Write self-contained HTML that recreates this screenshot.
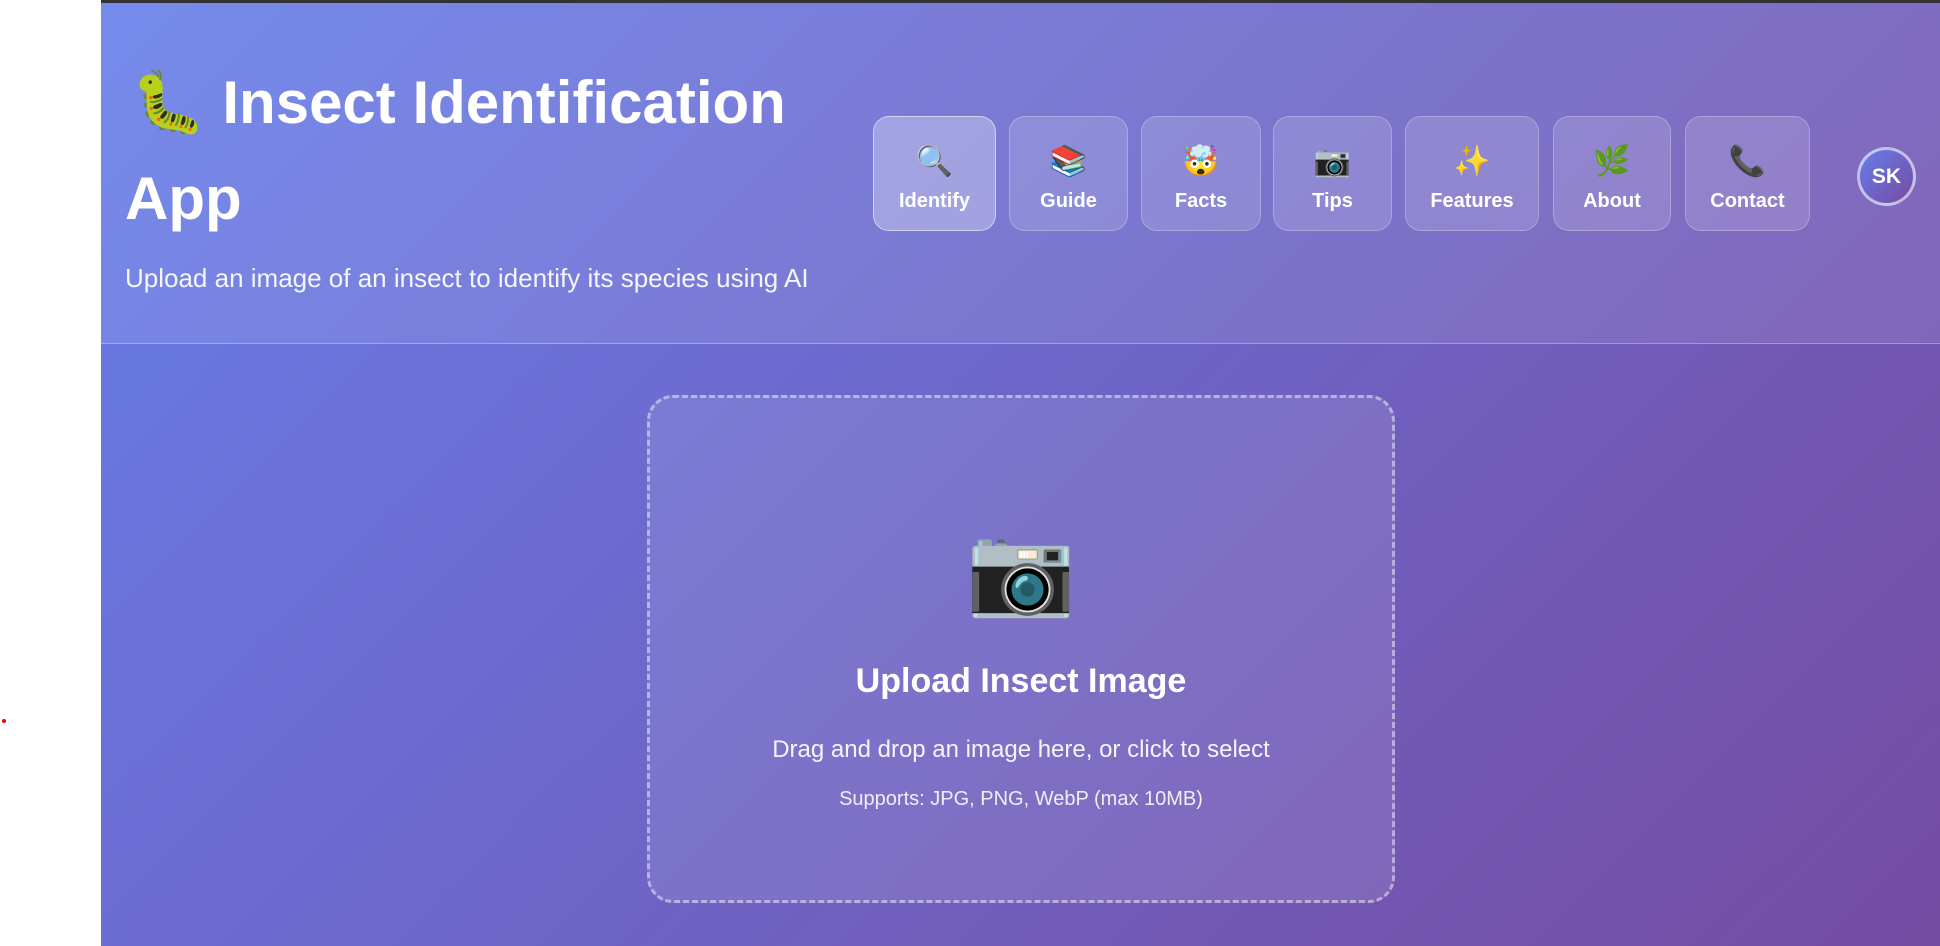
<!DOCTYPE html>
<html><head><meta charset="utf-8"><style>
*{margin:0;padding:0;box-sizing:border-box}
html,body{width:1940px;height:946px;overflow:hidden;background:#fff;font-family:"Liberation Sans","Noto Sans CJK SC",sans-serif}
#main{position:absolute;left:101px;top:0;width:1839px;height:946px;background:linear-gradient(135deg,#667eea 0%,#764ba2 100%);border-top:3px solid #333}
#hdr{position:absolute;left:0;top:0;width:1839px;height:341px;background:rgba(255,255,255,0.1);border-bottom:1px solid rgba(255,255,255,0.3)}
.t{position:absolute;color:#fff;white-space:nowrap}
.nav{position:absolute;top:113px;height:115px;border-radius:16px;background:rgba(255,255,255,0.15);border:1px solid rgba(255,255,255,0.25);color:#fff;text-align:center}
.nav.a{background:rgba(255,255,255,0.3);border-color:rgba(255,255,255,0.5)}
.nav .i{position:absolute;left:0;right:0;top:28px;font-size:30px;line-height:34px}
.nav .l{position:absolute;left:0;right:0;top:72px;font-size:20px;font-weight:bold;line-height:24px}
#box{position:absolute;left:546px;top:392px;width:748px;height:508px;border:3px dashed rgba(255,255,255,0.45);border-radius:26px;background:rgba(255,255,255,0.1)}
.c{position:absolute;left:0;right:0;text-align:center;color:#fff}
</style></head><body>
<div style="position:absolute;left:2px;top:719px;width:4px;height:4px;border-radius:2px;background:#e00"></div>
<div id="main">
<div id="hdr">
 <div class="t" style="left:30px;top:65px;font-size:60px;font-weight:bold;line-height:70px">🐛 Insect Identification</div>
 <div class="t" style="left:24px;top:161px;font-size:60px;font-weight:bold;line-height:70px">App</div>
 <div class="t" style="left:24px;top:259px;font-size:26px;line-height:32px;color:rgba(255,255,255,0.92)">Upload an image of an insect to identify its species using AI</div>
 <div class="nav a" style="left:772px;width:123px"><div class="i">🔍</div><div class="l">Identify</div></div>
 <div class="nav" style="left:908px;width:119px"><div class="i">📚</div><div class="l">Guide</div></div>
 <div class="nav" style="left:1040px;width:120px"><div class="i">🤯</div><div class="l">Facts</div></div>
 <div class="nav" style="left:1172px;width:119px"><div class="i">📷</div><div class="l">Tips</div></div>
 <div class="nav" style="left:1304px;width:134px"><div class="i">✨</div><div class="l">Features</div></div>
 <div class="nav" style="left:1452px;width:118px"><div class="i">🌿</div><div class="l">About</div></div>
 <div class="nav" style="left:1584px;width:125px"><div class="i">📞</div><div class="l">Contact</div></div>
 <div style="position:absolute;left:1756px;top:144px;width:59px;height:59px;border-radius:50%;background:linear-gradient(135deg,#667eea,#764ba2);border:3px solid rgba(255,255,255,0.6);color:#fff;font-weight:bold;font-size:21px;line-height:53px;text-align:center">SK</div>
</div>
<div id="box">
 <div class="c" style="top:122px;font-size:88px;line-height:100px">📷</div>
 <div class="c" style="top:262px;font-size:34px;font-weight:bold;line-height:42px">Upload Insect Image</div>
 <div class="c" style="top:337px;font-size:24px;line-height:30px;color:rgba(255,255,255,0.92)">Drag and drop an image here, or click to select</div>
 <div class="c" style="top:389px;font-size:20px;line-height:24px;color:rgba(255,255,255,0.88)">Supports: JPG, PNG, WebP (max 10MB)</div>
</div>
</div>
</body></html>
